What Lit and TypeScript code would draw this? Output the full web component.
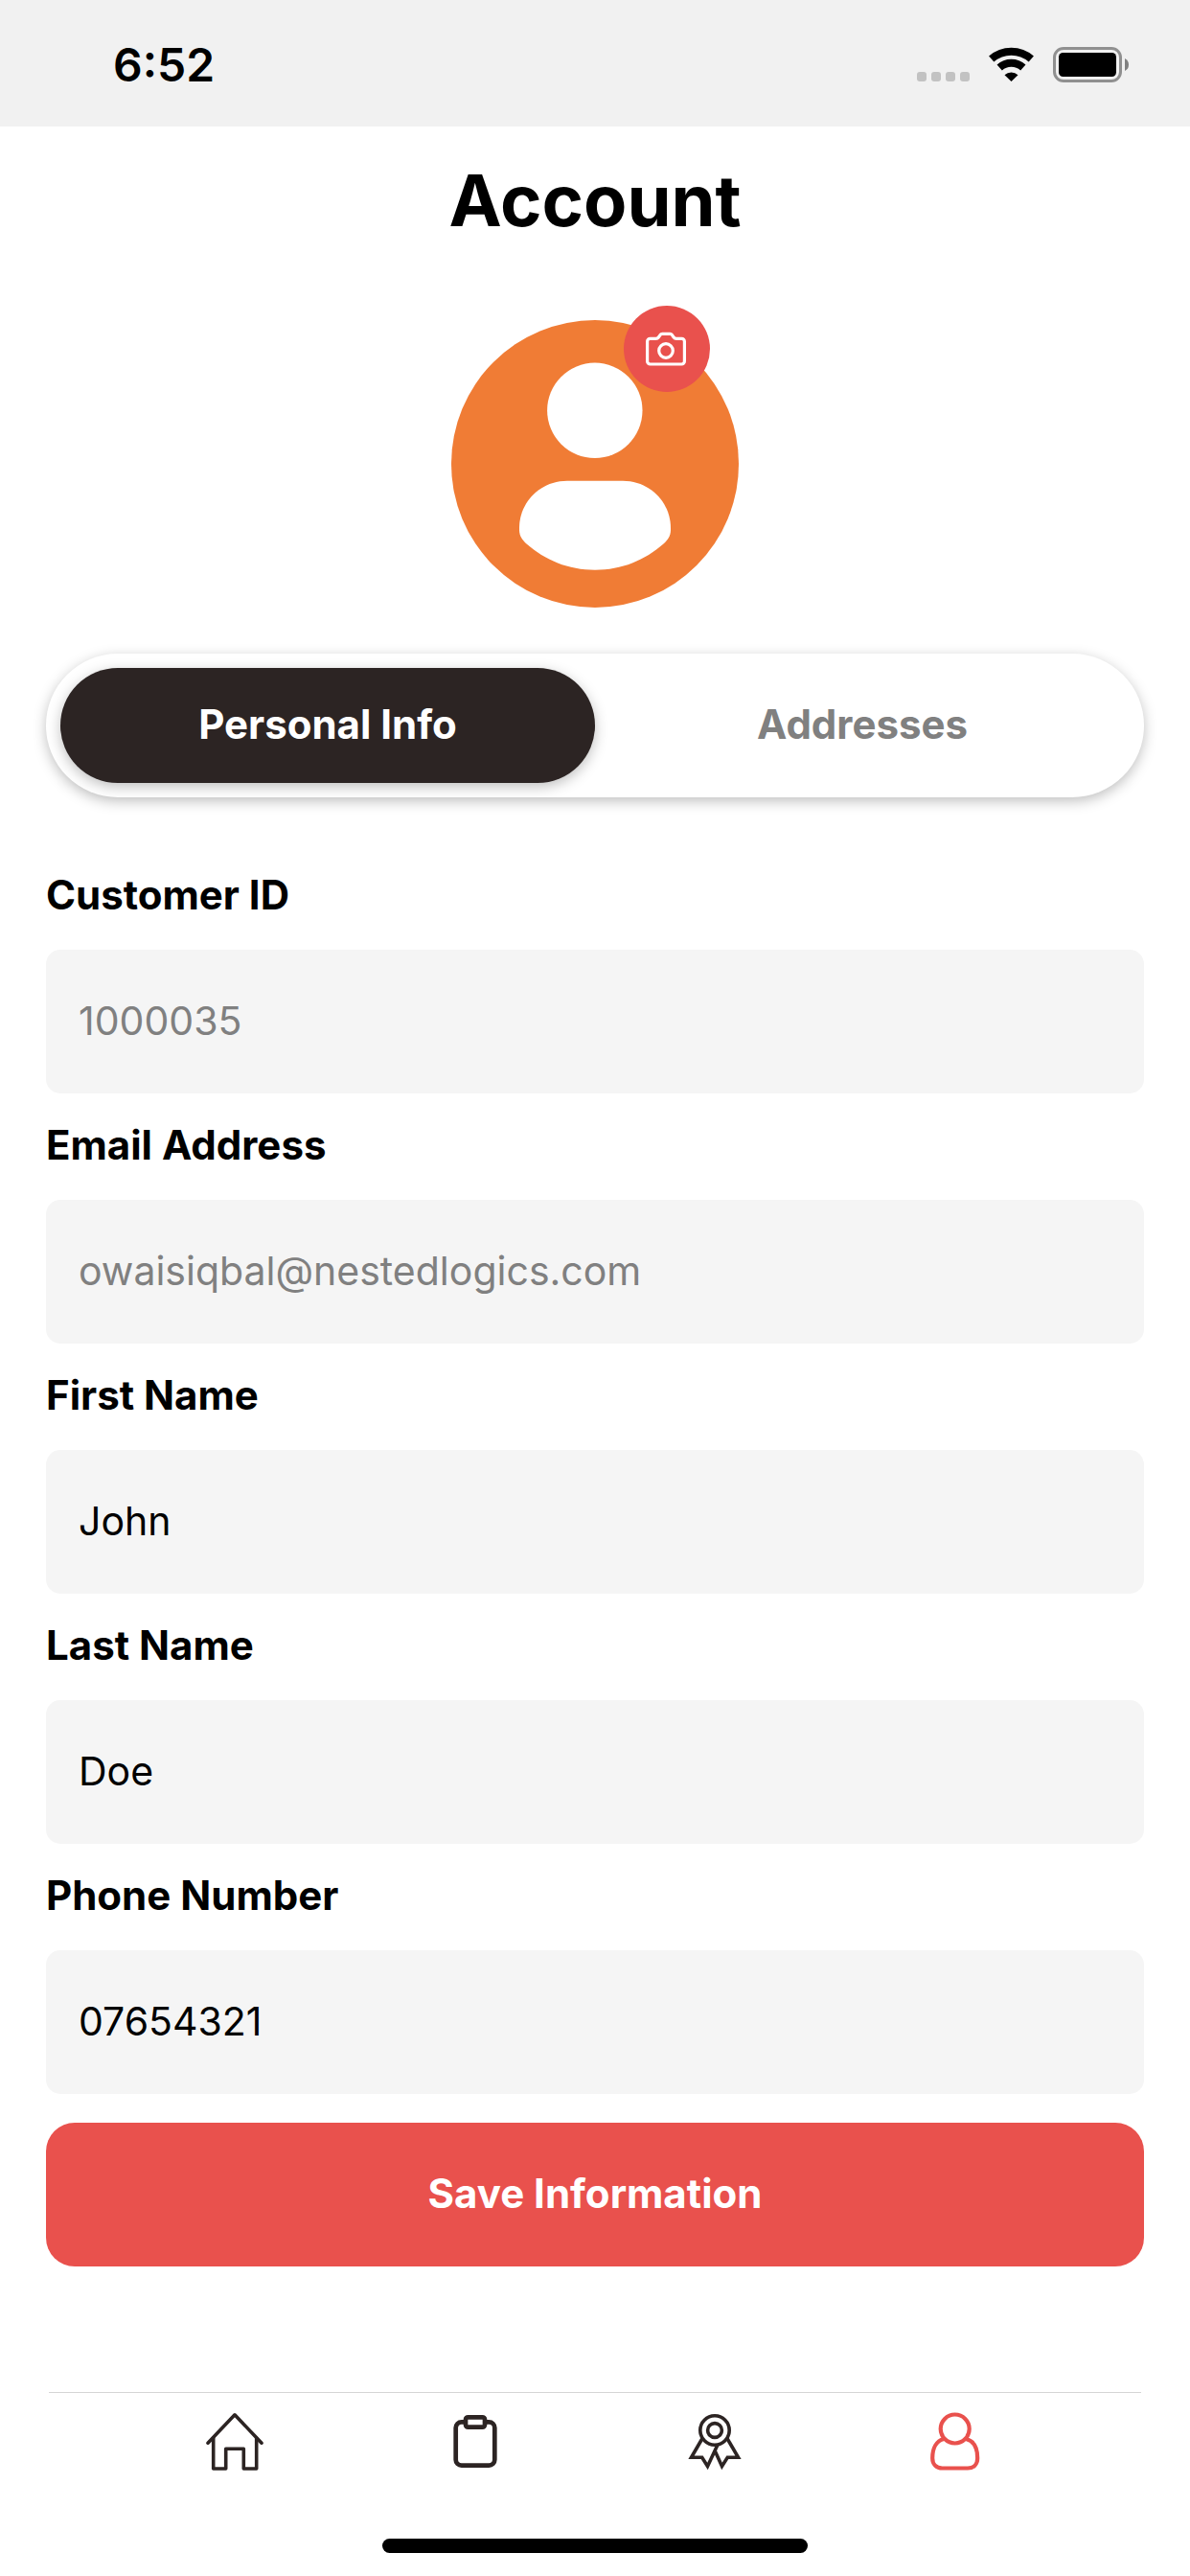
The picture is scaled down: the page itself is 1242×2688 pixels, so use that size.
import { LitElement, html, css, svg } from "lit";
import { customElement, state } from "lit/decorators.js";
import { classMap } from "lit/directives/class-map.js";

interface Field {
  id: string;
  label: string;
  value: string;
  type: string;
  locked: boolean;
}

const FIELDS: Field[] = [
  { id: "customer-id", label: "Customer ID", value: "1000035", type: "text", locked: true },
  { id: "email", label: "Email Address", value: "owaisiqbal@nestedlogics.com", type: "email", locked: true },
  { id: "first-name", label: "First Name", value: "John", type: "text", locked: false },
  { id: "last-name", label: "Last Name", value: "Doe", type: "text", locked: false },
  { id: "phone", label: "Phone Number", value: "07654321", type: "tel", locked: false },
];

const NAV = [
  {
    name: "Home",
    icon: svg`<g stroke-width="3.6" stroke-linecap="round" stroke-linejoin="round">
      <path d="M2 32.2 30 2.8 58 32.2"/>
      <path d="M7.7 27V59H20.7V38.3H39.3V59H52.7V27"/></g>`,
  },
  {
    name: "Orders",
    icon: svg`<g stroke-width="4.7">
      <path d="M19 10.3H15.700a6 6 0 0 0-6 6V49.700a6 6 0 0 0 6 6H44.300a6 6 0 0 0 6-6V16.300a6 6 0 0 0-6-6H41"/>
      <rect x="20" y="5.300" width="20" height="10.400" rx="2.500"/></g>`,
  },
  {
    name: "Rewards",
    icon: svg`<g stroke-width="3.6">
      <circle cx="30" cy="19" r="15.2"/>
      <circle cx="30" cy="19" r="7.4"/>
      <path d="M17 27.500 5.500 47.300H16.700L22.500 56.500 33 34"/>
      <path d="M43 27.500 54.500 47.300H43.300L37.500 56.500 30 40"/></g>`,
  },
  {
    name: "Account",
    icon: svg`<g stroke-width="4.2">
      <circle cx="29.700" cy="17.500" r="15"/>
      <path d="M18.200 28C10 30 6.200 38 6.200 48C6.200 54.500 10.500 58.500 16.500 58.500H43C49 58.500 53.200 54.500 53.200 48C53.200 38 49.500 30 41.200 28"/></g>`,
  },
];

@customElement("app-root")
export class AppRoot extends LitElement {
  static styles = css`
    :host {
      display: block;
      font-family: Inter, "Liberation Sans", sans-serif;
      color: #000;
      background: #fff;
    }
    .screen {
      display: flex;
      flex-direction: column;
      min-height: 100vh;
    }
    button,
    input {
      font: inherit;
      border: 0;
      margin: 0;
      box-sizing: border-box;
    }
    svg {
      display: block;
      overflow: visible;
    }
    .status {
      display: flex;
      justify-content: space-between;
      align-items: center;
      height: 132px;
      padding: 4px 64px 0 118px;
      box-sizing: border-box;
      background: #f1f1f1;
    }
    .time {
      font-size: 48px;
      line-height: 58px;
      font-weight: 600;
    }
    .main {
      display: flex;
      flex-direction: column;
      flex: 1;
      padding: 32px 48px;
    }
    .title {
      margin: 0;
      font-size: 74px;
      line-height: 90px;
      font-weight: 700;
      text-align: center;
    }
    .avatar {
      position: relative;
      align-self: center;
      width: 300px;
      margin-top: 80px;
    }
    .camera {
      position: absolute;
      top: -15px;
      right: 30px;
      width: 90px;
      height: 90px;
      padding: 0;
      border-radius: 50%;
      background: #e9514d;
    }
    .tabs {
      display: grid;
      grid-template-columns: 1fr 1fr;
      margin-top: 48px;
      padding: 15px;
      border-radius: 75px;
      box-shadow: 0 4px 14px rgba(0, 0, 0, 0.25);
    }
    .tab {
      height: 120px;
      padding: 0 0 3px;
      border-radius: 60px;
      background: none;
      color: #808080;
      font-size: 42px;
      font-weight: 700;
    }
    .tab.active {
      background: #2c2423;
      color: #fff;
      box-shadow: 0 4px 14px rgba(0, 0, 0, 0.25);
    }
    .form {
      display: flex;
      flex-direction: column;
      gap: 30px;
      margin-top: 78px;
    }
    .field {
      display: flex;
      flex-direction: column;
      gap: 33px;
    }
    .label {
      font-size: 42px;
      line-height: 48px;
      font-weight: 700;
    }
    .input {
      width: 100%;
      height: 150px;
      padding: 0 34px 3px;
      border-radius: 15px;
      background: #f5f5f5;
      color: #000;
      font-size: 41px;
      outline: none;
    }
    .input:disabled {
      color: #808080;
    }
    .save {
      height: 150px;
      padding: 0 0 3px;
      border-radius: 30px;
      background: #e9514d;
      color: #fff;
      font-size: 42px;
      font-weight: 700;
    }
    .nav {
      display: grid;
      grid-template-columns: repeat(4, 1fr);
      margin: 0 51px;
      padding: 20px 69px 0;
      border-top: 1px solid #d5d5d5;
    }
    .link {
      display: flex;
      justify-content: center;
      color: #2c2423;
    }
    .link.active {
      color: #e9514d;
    }
    .indicator {
      align-self: center;
      width: 444px;
      height: 15px;
      margin: 72px 0 24px;
      border-radius: 8px;
      background: #000;
    }
  `;

  @state() private tab = "Personal Info";

  render() {
    return html`
      <div class="screen">
        <header class="status">
          <span class="time">6:52</span>
          <svg width="221" height="38" viewBox="0 0 221 38" aria-hidden="true">
            <g fill="#c2c2c2">
              ${[0, 15, 30, 45].map((x) => svg`<rect x=${x} y="26" width="10" height="10" rx="3"/>`)}
            </g>
            <g fill="none" stroke="#000">
              <path stroke-width="8" d="M77.700 12.500A31.500 31.500 0 0 1 119.300 12.500"/>
              <path stroke-width="8" d="M86.200 21.500A18.500 18.500 0 0 1 110.800 21.500"/>
            </g>
            <path d="M91.500 29.200A10.500 10.500 0 0 1 105.500 29.200L98.500 36Z"/>
            <rect x="143.500" y="1.500" width="69" height="34" rx="9.500" fill="none" stroke="#909090" stroke-width="3"/>
            <rect x="148" y="6" width="60" height="25" rx="4.500"/>
            <path fill="#808080" d="M217 12Q221 14 221 18.500T217 25Z"/>
          </svg>
        </header>
        <main class="main">
          <h1 class="title">Account</h1>
          <div class="avatar">
            <svg width="300" height="300" viewBox="0 0 300 300" role="img" aria-label="Profile picture">
              <circle cx="150" cy="150" r="150" fill="#f07c35"/>
              <circle cx="149.800" cy="94.300" r="49.700" fill="#fff"/>
              <path fill="#fff" d="M121 167.700H179C207 167.700 229 190 229 217V219.300C229 225 226 229.500 221.500 233.500C202 250.500 178 260.700 150 260.700S98 250.500 78.500 233.500C74 229.500 71 225 71 219.300V217C71 190 93 167.700 121 167.700Z"/>
            </svg>
            <button class="camera" aria-label="Change picture">
              <svg width="90" height="90" viewBox="0 0 90 90" fill="none" stroke="#fff" stroke-width="3.200" stroke-linejoin="round">
                <path d="M27.600 34.300H33.500C34.800 34.300 35.600 34 36.300 33L38.200 30.300C38.800 29.500 39.300 29.300 40.200 29.300H48.300C49.200 29.300 49.700 29.500 50.300 30.300L52.200 33C52.900 34 53.700 34.300 55 34.300H60.400A3 3 0 0 1 63.400 37.300V58A3 3 0 0 1 60.400 61H27.600A3 3 0 0 1 24.600 58V37.300A3 3 0 0 1 27.600 34.300Z"/>
                <circle cx="44" cy="47" r="7.300"/>
              </svg>
            </button>
          </div>
          <div class="tabs" role="tablist">
            ${["Personal Info", "Addresses"].map(
              (name) => html`<button
                role="tab"
                aria-selected=${this.tab === name}
                class=${classMap({ tab: true, active: this.tab === name })}
                @click=${() => (this.tab = name)}
              >${name}</button>`
            )}
          </div>
          <form class="form" @submit=${(e: Event) => e.preventDefault()}>
            ${FIELDS.map(
              (f) => html`<div class="field">
                <label class="label" for=${f.id}>${f.label}</label>
                <input class="input" id=${f.id} type=${f.type} .value=${f.value} ?disabled=${f.locked} />
              </div>`
            )}
            <button class="save" type="submit">Save Information</button>
          </form>
        </main>
        <nav class="nav">
          ${NAV.map(
            (n) => html`<a
              href="#"
              aria-label=${n.name}
              class=${classMap({ link: true, active: n.name === "Account" })}
            ><svg width="60" height="60" viewBox="0 0 60 60" fill="none" stroke="currentColor">${n.icon}</svg></a>`
          )}
        </nav>
        <div class="indicator"></div>
      </div>
    `;
  }
}
